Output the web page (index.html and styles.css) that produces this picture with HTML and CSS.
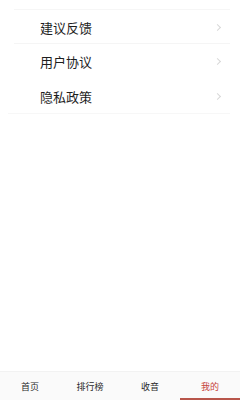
FILE: index.html
```html
<!DOCTYPE html>
<html>
<head>
	<meta charset="utf-8">
	<title>我的</title>
	<link rel="stylesheet" href="styles.css">
</head>
<body>
<div class="page">
	<div class="menu">
		<div class="item first"><span class="label">建议反馈</span><span class="arrow"></span></div>
		<div class="item plain"><span class="label">用户协议</span><span class="arrow"></span></div>
		<div class="item last"><span class="label">隐私政策</span><span class="arrow"></span></div>
	</div>
	<div class="tabbar">
		<div class="tab">首页</div>
		<div class="tab">排行榜</div>
		<div class="tab">收音</div>
		<div class="tab active">我的</div>
	</div>
</div>
</body>
</html>
```

FILE: styles.css
```css
html, body {
	margin: 0;
	padding: 0;
	background: #fff;
}
.page {
	width: 240px;
	height: 400px;
	display: flex;
	flex-direction: column;
	font-family: "Noto Sans CJK SC", "Noto Sans", sans-serif;
}
.menu {
	margin-top: 9px;
	margin-left: 8px;
	margin-right: 10px;
}
.item {
	height: 35px;
	display: flex;
	align-items: center;
	justify-content: space-between;
	padding-left: 32px;
	padding-right: 6px;
	padding-top: 1px;
	border-bottom: 1px solid #f5f5f5;
	box-sizing: border-box;
}
.item.first {
	border-top: 1px solid #f6f6f6;
	margin-left: 6px;
	padding-left: 26px;
}
.item.plain {
	border-bottom-color: transparent;
}
.item.last {
	border-bottom-color: #f7f7f7;
}
.label {
	font-size: 13px;
	color: #1e1e1e;
}
.arrow {
	width: 4px;
	height: 4px;
	border-top: 1px solid #d8d8d8;
	border-right: 1px solid #d8d8d8;
	transform: rotate(45deg);
	margin-right: 4px;
}
.tabbar {
	margin-top: auto;
	height: 28px;
	display: flex;
	background: #fafafa;
	border-top: 1px solid #f2f2f2;
}
.tab {
	flex: 1;
	display: flex;
	align-items: center;
	justify-content: center;
	font-size: 9px;
	color: #2a2a2a;
	box-sizing: border-box;
	padding-top: 1px;
}
.tab.active {
	color: #c6443a;
	border-bottom: 2px solid #b8554a;
	padding-top: 3px;
}
```
